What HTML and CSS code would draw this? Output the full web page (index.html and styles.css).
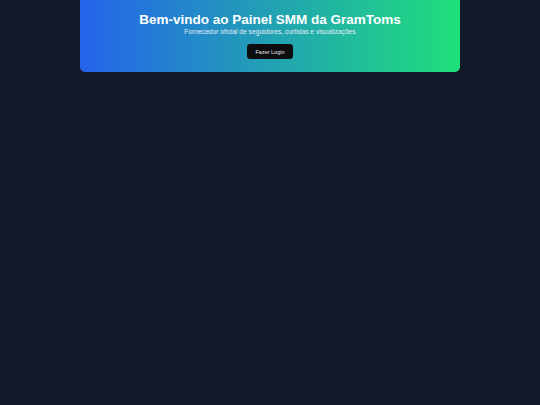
FILE: index.html
```html
<!DOCTYPE html>
<html lang="pt-BR">
<head>
    <meta charset="utf-8" />
    <title>GramToms SMM</title>
    <link rel="stylesheet" href="styles.css">
</head>
<body>
    <header class="hero">
        <h1 class="hero-title">Bem-vindo ao Painel SMM da GramToms</h1>
        <p class="hero-sub">Fornecedor oficial de seguidores, curtidas e visualizações</p>
        <button class="login-btn">Fazer Login</button>
    </header>
</body>
</html>
```

FILE: styles.css
```css
* {
    margin: 0;
    padding: 0;
    box-sizing: border-box;
}

body {
    background-color: #111827;
    font-family: "Liberation Sans", Arial, sans-serif;
    min-height: 100vh;
}

.hero {
    width: 380px;
    height: 72px;
    margin: 0 auto;
    padding-top: 12px;
    display: flex;
    flex-direction: column;
    align-items: center;
    color: white;
    text-align: center;
    background: linear-gradient(to right, #2563eb, #1fdf7b);
    border-radius: 0 0 5px 5px;
}

.hero-title {
    font-size: 13.5px;
    font-weight: bold;
    line-height: 16px;
}

.hero-sub {
    font-size: 6.7px;
    line-height: 8px;
    color: #e5edf8;
}

.login-btn {
    margin-top: 8px;
    width: 46px;
    height: 15px;
    font-family: inherit;
    font-size: 5.5px;
    color: #e5e7eb;
    background-color: #0d0d10;
    border: none;
    border-radius: 3px;
}
```
